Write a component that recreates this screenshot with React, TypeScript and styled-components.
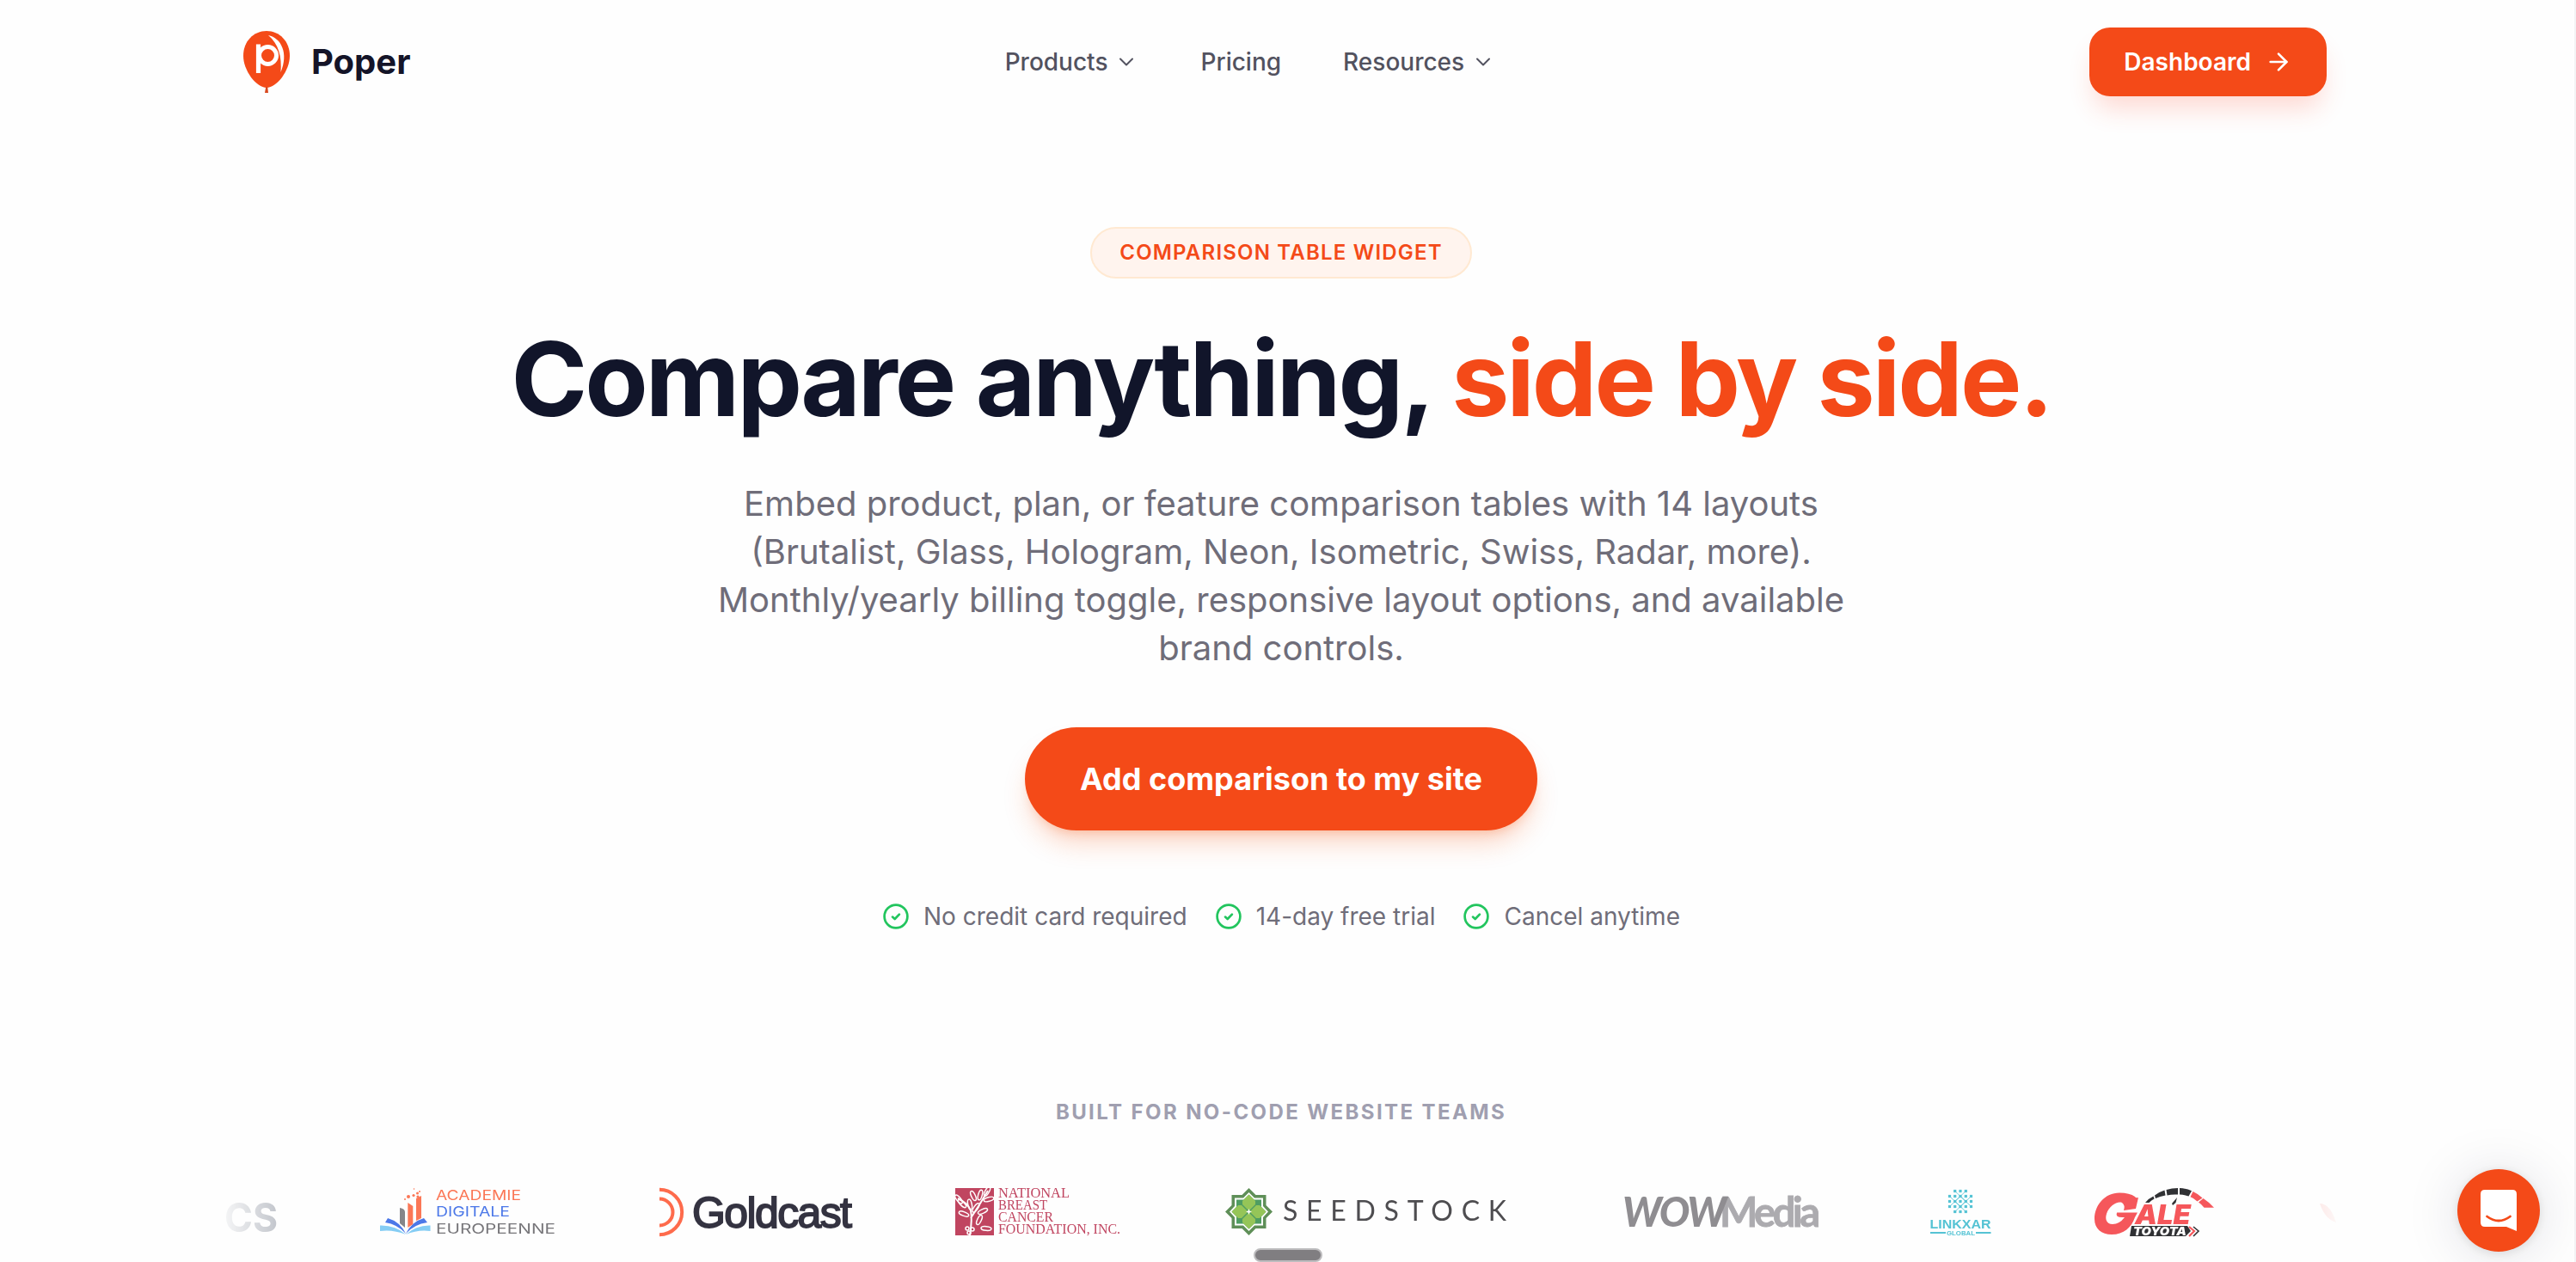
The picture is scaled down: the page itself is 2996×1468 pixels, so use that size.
import styled, { createGlobalStyle } from 'styled-components'
import { ArrowRight, ChevronDown } from 'lucide-react'

const GlobalStyle = createGlobalStyle`
	* {
		box-sizing: border-box;
	}
	body {
		margin: 0;
		background: #fefefe;
		color: #11152a;
		font-family: Inter, 'Liberation Sans', sans-serif;
		-webkit-font-smoothing: antialiased;
		overflow: hidden;
	}
	h1, p {
		margin: 0;
	}
`
const Page = styled.div`
	height: 1468px;
	padding-right: 14px;
	border-right: 2px solid #f3f3f5;
	overflow: hidden;
`
const Header = styled.header`
	display: flex;
	align-items: center;
	justify-content: space-between;
	width: 2432px;
	height: 144px;
	margin: 0 auto;
`
const Brand = styled.a`
	display: flex;
	align-items: center;
	gap: 16px;
	font-size: 40px;
	font-weight: 700;
	color: #141428;
	span {
		padding-bottom: 2px;
	}
`
const Nav = styled.nav`
	display: flex;
	align-items: center;
	gap: 72px;
`
const NavItem = styled.a`
	display: flex;
	align-items: center;
	gap: 8px;
	font-size: 28px;
	font-weight: 500;
	color: #52525f;
`
const DashboardButton = styled.button`
	display: flex;
	align-items: center;
	gap: 16px;
	height: 80px;
	padding: 0 40px;
	border: none;
	border-radius: 24px;
	background: #f44a18;
	box-shadow: 0 20px 30px -6px rgba(255, 70, 40, 0.2);
	color: #fff;
	font-family: inherit;
	font-size: 28px;
	font-weight: 600;
`
const Hero = styled.main`
	display: flex;
	flex-direction: column;
	align-items: center;
	padding-top: 120px;
	text-align: center;
`
const Badge = styled.span`
	display: flex;
	align-items: center;
	height: 60px;
	padding: 0 32px 1px;
	border: 2px solid #ffe9d2;
	border-radius: 30px;
	background: #fff4ee;
	color: #f44a18;
	font-size: 24px;
	font-weight: 600;
	letter-spacing: 1.2px;
`
const Title = styled.h1`
	margin-top: 51px;
	font-size: 120px;
	font-weight: 700;
	line-height: 132px;
	letter-spacing: -3px;
	white-space: nowrap;
	span {
		color: #f44a18;
	}
`
const Lead = styled.p`
	width: 1344px;
	margin-top: 51px;
	font-size: 40px;
	line-height: 56px;
	color: #6f6d79;
`
const CtaButton = styled.button`
	height: 120px;
	margin-top: 64px;
	padding: 0 64px;
	border: none;
	border-radius: 60px;
	background: #f44a18;
	box-shadow: 0 20px 30px -6px rgba(249, 90, 22, 0.25), 0 8px 12px -6px rgba(249, 90, 22, 0.25);
	color: #fff;
	font-family: inherit;
	font-size: 36px;
	font-weight: 700;
	white-space: nowrap;
`
const Perks = styled.div`
	display: flex;
	gap: 32px;
	margin-top: 80px;
`
const Perk = styled.div`
	display: flex;
	align-items: center;
	gap: 16px;
	height: 40px;
	font-size: 28px;
	color: #6f6d79;
`
const TrustLabel = styled.p`
	margin-top: 192px;
	font-size: 24px;
	font-weight: 700;
	line-height: 32px;
	letter-spacing: 2.4px;
	text-align: center;
	color: #a09fb0;
`
const Marquee = styled.div`
	width: 2480px;
	margin: 60px auto 0;
	padding: 12px 0;
	overflow: hidden;
	mask-image: linear-gradient(to right, transparent, #000 160px, #000 calc(100% - 160px), transparent);
`
const Track = styled.div`
	display: flex;
	gap: 120px;
	width: max-content;
	margin-left: -27px;
	svg {
		display: block;
		flex: none;
		overflow: visible;
	}
`
const DragHandle = styled.div`
	position: fixed;
	left: 1458px;
	bottom: 0;
	width: 80px;
	height: 16px;
	border: 2px solid #bdbcbe;
	border-radius: 8px;
	background: #807e81;
`
const ChatButton = styled.button`
	position: fixed;
	right: 42px;
	bottom: 12px;
	display: flex;
	align-items: center;
	justify-content: center;
	width: 96px;
	height: 96px;
	padding: 0;
	border: none;
	border-radius: 50%;
	background: #f44a18;
	box-shadow: 0 2px 12px rgba(0, 0, 0, 0.1), 0 4px 64px rgba(20, 10, 60, 0.13);
`

const Balloon = () => (
	<svg width='72' height='72' viewBox='0 0 72 72'>
		<path d='M36 0C51 0 63 12 63 29C63 46 48 66 36 66C24 66 9 46 9 29C9 12 21 0 36 0Z' fill='#f44a18' />
		<path d='M35.2 65h2l.8 7h-4z' fill='#d8481e' />
		<path d='M26.5 15.5V49' stroke='#fff' strokeWidth='5.2' />
		<circle cx='37.5' cy='28.5' r='10' fill='none' stroke='#fff' strokeWidth='5' />
		<path d='M38 5C53 8 62 26 52.5 48C54 30 50 15 38 5Z' fill='#fff' />
	</svg>
)

const CheckIcon = () => (
	<svg width='32' height='32' viewBox='0 0 32 32' fill='none' stroke='#22c55e' strokeLinecap='round' strokeLinejoin='round'>
		<circle cx='16' cy='16' r='13.4' strokeWidth='2.7' />
		<path d='M12 16.6l2.7 2.4 5.2-5.4' strokeWidth='2.7' />
	</svg>
)

const PartialLogo = () => (
	<svg width='99' height='56' viewBox='0 0 99 56'>
		<text x='38' y='50.5' fontSize='47' fontWeight='700' fill='#7d8492' textLength='62' lengthAdjust='spacingAndGlyphs'>CS</text>
	</svg>
)

const AcademieLogo = () => (
	<svg width='204' height='56' viewBox='0 0 204 56' fontSize='16'>
		<path d='M0 43.5Q18 43 30 54Q15 48 0 50Z' fill='#85cdf4' />
		<path d='M58.5 43.5Q42 43 30 54Q44 48 58.5 50Z' fill='#85cdf4' />
		<path d='M9 35Q23 39 30 53Q20 42 6 40Z' fill='#4c78e8' />
		<path d='M51 35Q37 39 30 53Q40 42 55 40Z' fill='#4c78e8' />
		<path d='M23 23q6 1 6 5v18l-6-5z' fill='#858589' />
		<path d='M32.3 17l6 4V42l-6 4z' fill='#fb7756' />
		<path d='M42 12l6-3V35l-6 3z' fill='#fb7756' />
		<g fill='#fb7756'>
			<circle cx='33' cy='10' r='2' />
			<circle cx='39' cy='8.5' r='1.6' />
			<circle cx='43.5' cy='6' r='1.5' />
			<circle cx='39.5' cy='1' r='.8' />
			<circle cx='29' cy='13' r='1' />
			<circle cx='46' cy='4' r='1' />
			<circle cx='44' cy='10' r='1.6' />
		</g>
		<text x='65' y='13.5' fill='#fb7756' textLength='99' lengthAdjust='spacingAndGlyphs'>ACADEMIE</text>
		<text x='65' y='33' fill='#4c78e8' textLength='86' lengthAdjust='spacingAndGlyphs'>DIGITALE</text>
		<text x='65' y='52.5' fill='#77767a' textLength='139' lengthAdjust='spacingAndGlyphs'>EUROPEENNE</text>
	</svg>
)

const GoldcastLogo = () => (
	<svg width='225' height='56' viewBox='0 0 225 56'>
		<g fill='none' stroke='#fe6b4c' strokeWidth='4'>
			<path d='M1 1.8A26.2 26.2 0 0 1 1 54.2' />
			<path d='M1 12.5A15.5 15.5 0 0 1 1 43.5' />
		</g>
		<text x='39' y='46' fontFamily='Liberation Sans, sans-serif' fontSize='50' fill='#343341' stroke='#343341' strokeWidth='1.8' textLength='186'>Goldcast</text>
	</svg>
)

const leaves = [
	[8, 18, 45],
	[17, 19, 78],
	[21, 9, 65],
	[10, 30, 20],
	[29, 8, -75],
	[37, 4, -60],
	[39, 13, -15],
	[24, 23, -55],
	[32, 27, -25],
	[28, 37, -65],
	[36, 47, 5],
	[4, 13, 50],
]

const BreastCancerLogo = () => (
	<svg width='194' height='56' viewBox='0 0 194 56' fontFamily='Liberation Serif, serif' fontSize='16.3' fill='#c04560'>
		<rect width='45' height='55' />
		<g stroke='#fff' strokeWidth='1.5' fill='none'>
			<path d='M17 55Q20 36 18 26Q15 18 3 12M18 35Q28 20 38 3' strokeWidth='2' />
			{leaves.map(([x, y, angle]) => (
				<ellipse key={`${x}-${y}`} cx={x} cy={y} rx='6' ry='2.3' transform={`rotate(${angle} ${x} ${y})`} />
			))}
			<circle cx='14' cy='47' r='2' />
			<circle cx='20' cy='48' r='2' />
			<circle cx='16' cy='52' r='2' />
		</g>
		<text x='50' y='11' textLength='83' lengthAdjust='spacingAndGlyphs'>NATIONAL</text>
		<text x='50' y='24.7' textLength='57' lengthAdjust='spacingAndGlyphs'>BREAST</text>
		<text x='50' y='38.7' textLength='64' lengthAdjust='spacingAndGlyphs'>CANCER</text>
		<text x='50' y='53' textLength='142' lengthAdjust='spacingAndGlyphs'>FOUNDATION, INC.</text>
	</svg>
)

const SeedstockLogo = () => (
	<svg width='346' height='56' viewBox='0 0 346 56'>
		<path d='M27.5 0L35.5 8H47.5V20L55 27.5L47.5 35V47H35.5L27.5 55L19.5 47H7.5V35L0 27.5L7.5 20V8H19.5Z' fill='#5f8f58' />
		<path d='M27.5 5L34 11.5H44V21L50 27.5L44 34V43.5H34L27.5 50L21 43.5H11V34L5 27.5L11 21V11.5H21Z' fill='#fff' />
		<path d='M27.5 7.5L33.5 13.5H42V22L47.5 27.5L42 33V41.5H33.5L27.5 47.5L21.5 41.5H13V33L7.5 27.5L13 22V13.5H21.5Z' fill='#4f9d62' />
		<g fill='#95c558'>
			<path d='M27.5 7.5l7.5 7.5v4l-7.5 7.5-7.5-7.5v-4z' />
			<path d='M27.5 47.5l7.5-7.5v-4l-7.5-7.5-7.5 7.5v4z' />
			<path d='M7.5 27.5l7.5-7.5h4l7.5 7.5-7.5 7.5h-4z' />
			<path d='M47.5 27.5l-7.5-7.5h-4l-7.5 7.5 7.5 7.5h4z' />
		</g>
		<path d='M27.5 24l1 2.5 2.5 1-2.5 1-1 2.5-1-2.5-2.5-1 2.5-1z' fill='#fff' />
		<text x='67' y='38' fontFamily='Lato, sans-serif' fontSize='32' fill='#4e4d50' textLength='260'>SEEDSTOCK</text>
	</svg>
)

const WowLogo = () => (
	<svg width='224' height='56' viewBox='0 0 224 56' fontFamily='Lato, sans-serif' fontSize='47' fontWeight='700'>
		<text x='109' y='45' fill='#acabaf' stroke='#acabaf' strokeWidth='.8' textLength='117'>Media</text>
		<text x='-4' y='45' fontStyle='italic' fontWeight='900' fill='#8f8d91' textLength='121'>WOW</text>
	</svg>
)

const LinkxarLogo = () => (
	<svg width='81' height='56' viewBox='0 0 81 56' fontFamily='Liberation Sans, sans-serif' fontWeight='700' fill='#55c3d4'>
		<path d='M32.5 9.5L45 21.5L57.5 9.5M32.5 21.5L45 9.5L57.5 21.5M38.7 3.5L51.3 15.5L38.7 27.5M51.3 3.5L38.7 15.5L51.3 27.5' fill='none' stroke='#55c3d4' opacity='.8' />
		{[3.5, 9.5, 15.5, 21.5, 27.5].map((y, row) =>
			[32.5, 38.7, 45, 51.3, 57.5].map((x, col) =>
				(row === 0 || row === 4) && (col === 0 || col === 4) ? null : (
					<rect key={`${x}-${y}`} x={x - 1.6} y={y - 1.6} width='3.2' height='3.2' />
				)
			)
		)}
		<text x='9.5' y='47.3' fontSize='15.5' textLength='71' lengthAdjust='spacingAndGlyphs'>LINKXAR</text>
		<path d='M10 51h18v2H10zM63 51h17.5v2H63z' />
		<text x='29' y='54.5' fontSize='6.5' textLength='33' lengthAdjust='spacingAndGlyphs'>GLOBAL</text>
	</svg>
)

const GaleLogo = () => (
	<svg width='140' height='56' viewBox='0 0 140 56' fontFamily='Inter, sans-serif' fontStyle='italic' fontWeight='900'>
		<g fill='#303134'>
			<path d='M59 17Q63 12 68.5 9.5L69.5 12.5Q66 14 63.5 17Z' />
			<path d='M70 8.5Q75 4.5 81.5 2.5L82.5 8.5Q76 9.5 71 12Z' />
			<path d='M83.5 2Q90 0 97 0V7.5Q90 7 84.5 8.5Z' />
			<path d='M99 0Q107 .5 113 3.3L109.5 9.5Q104 7.5 99 7.5Z' />
			<path d='M96 11l-1.5 6-3.5 3-1-2z' />
		</g>
		<g fill='#f5575b'>
			<path d='M114.5 4Q121 7 125.5 11.5L119.5 15.5Q116 12 111.5 10.3Z' />
			<path d='M126.5 12Q134 17 139 22.7H127.5Q124 18.5 121 16.5Z' />
			<path d='M51 11Q48 12 47 10Q41 5.5 29 5.5C12 5.5 0 20 0 36C0 47 8 54 20 54C34 54 43 46 47 34L50 28.5H26Q24 34 32 34H35Q29 42 21 42C14 42 12 36 14 30C17 21 26 15 32 17Q36 20 34 26L48 24Z' />
			<text x='47' y='42.3' fontSize='31' textLength='65' lengthAdjust='spacingAndGlyphs'>ALE</text>
		</g>
		<path d='M43 44H108L112 50L106 56H41Z' fill='#303134' />
		<text x='45' y='55' fontSize='13.5' fill='#fff' textLength='62' lengthAdjust='spacingAndGlyphs'>TOYOTA</text>
		<path d='M110 45l6 5-6 6' fill='none' stroke='#f5575b' strokeWidth='2.2' />
		<path d='M115 45l6 5-6 6' fill='none' stroke='#303134' strokeWidth='1.6' />
	</svg>
)

const NextLogo = () => (
	<svg width='60' height='56' viewBox='0 0 60 56'>
		<path d='M2 18Q14 18 21 40Q8 36 2 18Z' fill='#f7a09a' />
	</svg>
)

const App: React.FC = () => {
	return (
		<>
			<GlobalStyle />
			<Page>
				<Header>
					<Brand>
						<Balloon />
						<span>Poper</span>
					</Brand>
					<Nav>
						<NavItem>
							Products
							<ChevronDown size={28} strokeWidth={1.7} />
						</NavItem>
						<NavItem>Pricing</NavItem>
						<NavItem>
							Resources
							<ChevronDown size={28} strokeWidth={1.7} />
						</NavItem>
					</Nav>
					<DashboardButton>
						Dashboard
						<ArrowRight size={32} strokeWidth={2} />
					</DashboardButton>
				</Header>
				<Hero>
					<Badge>COMPARISON TABLE WIDGET</Badge>
					<Title>
						Compare anything, <span>side by side.</span>
					</Title>
					<Lead>
						Embed product, plan, or feature comparison tables with 14 layouts (Brutalist, Glass, Hologram, Neon,
						Isometric, Swiss, Radar, more). Monthly/yearly billing toggle, responsive layout options, and available
						brand controls.
					</Lead>
					<CtaButton>Add comparison to my site</CtaButton>
					<Perks>
						{['No credit card required', '14-day free trial', 'Cancel anytime'].map((perk) => (
							<Perk key={perk}>
								<CheckIcon />
								{perk}
							</Perk>
						))}
					</Perks>
				</Hero>
				<TrustLabel>BUILT FOR NO-CODE WEBSITE TEAMS</TrustLabel>
				<Marquee>
					<Track>
						<PartialLogo />
						<AcademieLogo />
						<GoldcastLogo />
						<BreastCancerLogo />
						<SeedstockLogo />
						<WowLogo />
						<LinkxarLogo />
						<GaleLogo />
						<NextLogo />
					</Track>
				</Marquee>
			</Page>
			<DragHandle />
			<ChatButton>
				<svg width='42' height='48' viewBox='0 0 42 48'>
					<path d='M5 0H37Q42 0 42 5V48L30 43H5Q0 43 0 38V5Q0 0 5 0Z' fill='#fff' />
					<path d='M7.5 31Q21 41 34.5 31' fill='none' stroke='#f44a18' strokeWidth='2.8' strokeLinecap='round' />
				</svg>
			</ChatButton>
		</>
	)
}
export default App
